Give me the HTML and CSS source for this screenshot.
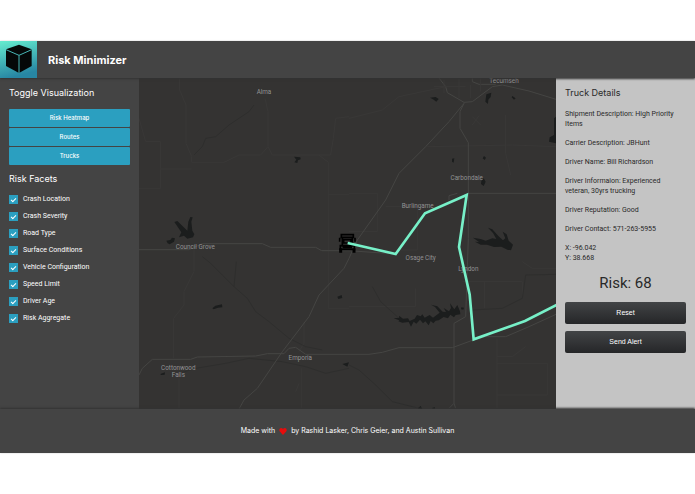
FILE: index.html
```html
<!DOCTYPE html>
<html lang="en">
<head>
<meta charset="utf-8">
<title>Risk Minimizer</title>
<link rel="stylesheet" href="styles.css">
</head>
<body>
<div class="app">
  <header class="header">
    <svg class="logo" viewBox="0 0 111 111" aria-hidden="true">
      <defs>
        <linearGradient id="logo-fill" x1="0" y1="0" x2="0.25" y2="1">
          <stop offset="0" stop-color="#66edcf"/>
          <stop offset="1" stop-color="#2786a3"/>
        </linearGradient>
      </defs>
      <rect width="111" height="111" fill="url(#logo-fill)"/>
      <path d="M57 11 95 25 95 75 57 96 18 75 18 25Z" fill="#050808"/>
      <path d="M18 26 57 43 95 26M57 43V96" fill="none" stroke="#46b5b5" stroke-width="3"/>
    </svg>
    <h1 class="title">Risk Minimizer</h1>
  </header>

  <main class="main">
    <aside class="sidebar">
      <h2 class="heading">Toggle Visualization</h2>
      <div class="toggles">
        <button class="toggle" type="button">Risk Heatmap</button>
        <button class="toggle" type="button">Routes</button>
        <button class="toggle" type="button">Trucks</button>
      </div>
      <h2 class="heading">Risk Facets</h2>
      <div class="facets">
        <label class="facet"><input type="checkbox" checked>Crash Location</label>
        <label class="facet"><input type="checkbox" checked>Crash Severity</label>
        <label class="facet"><input type="checkbox" checked>Road Type</label>
        <label class="facet"><input type="checkbox" checked>Surface Conditions</label>
        <label class="facet"><input type="checkbox" checked>Vehicle Configuration</label>
        <label class="facet"><input type="checkbox" checked>Speed Limit</label>
        <label class="facet"><input type="checkbox" checked>Driver Age</label>
        <label class="facet"><input type="checkbox" checked>Risk Aggregate</label>
      </div>
    </aside>

    <section class="map" aria-label="Map">
      <svg class="map-canvas" viewBox="0 9 1251 993" preserveAspectRatio="xMidYMid slice">
        <!-- minor roads and county lines -->
        <g class="road faint">
          <path d="M122 9V45L141 90V205L158 245V262H255L300 240H365L387 215V110L378 70M387 215 400 240H575L583 190 590 130 630 125M0 130 20 200H65V340H0M65 282H158M540 240 568 262V700H630M568 358H630M165 520V590L135 650V690L104 730V850M120 910V1000M495 740V805L480 830M487 880V1000M470 950 480 925"/>
          <path d="M630 130 730 105 780 65 850 50 920 35M630 355H715V470H630M740 395H835V525M865 215 1120 210 1251 215M1100 120V235L1115 300M835 525H770M630 695H830V640M1037 620V700M970 620H1150V670M1074 790V1000M1074 845H1120L1160 815M1074 865H1225V960H1074M1150 560 1180 580H1251"/>
        </g>
        <!-- rivers -->
        <g class="river">
          <path d="M345 90 330 110 270 150 230 185 200 190 190 215 165 240"/>
          <path d="M190 545 215 565 250 600 285 635 325 670 350 710 390 740 420 765 450 790 500 815 550 825M285 635 292 560M120 895 170 880 260 865 330 850 430 860 500 875 560 895 630 880"/>
          <path d="M700 635 725 680 775 725M1000 705 1090 700 1150 670 1160 600 1251 598M630 870 660 885 710 930 760 980 840 1000"/>
        </g>
        <!-- highways -->
        <g class="road">
          <path d="M0 524H150L190 506H370L395 517H530L548 527H630L770 537"/>
          <path d="M0 900 10 880 40 853H155L175 846 350 843 385 836H435L450 820 470 817 500 838H690L730 832 780 818H940L1000 796 1040 785H1100L1170 755 1251 718"/>
          <path d="M630 550 615 580 540 660 510 725 430 830 355 940 315 975 300 1002M630 550 655 495 740 375 780 295 860 215 930 140 975 85M975 85 963 110V160L988 203V490L980 725 945 745V985L930 1000M945 985 950 1000"/>
          <path d="M900 9 920 35 925 53 975 82 1000 80 1060 35 1090 30 1170 48 1251 73M985 355H1251M930 375V362L955 355M1000 9V20L1020 28H1070"/>
        </g>
        <g class="road faint"><path d="M885 35H980M915 15V55M960 12V70M995 30V70M1025 9V50M1000 125 1025 150M1020 122 1000 150"/></g>
        <!-- lakes -->
        <g class="lake">
          <path d="M106 441 115 438 145 467 148 440 154 426 161 427 157 440 160 467 166 478 162 487 145 491 135 482 120 487 127 472ZM82 497 94 495 99 488 108 490 105 500 92 508 86 505Z"/>
          <path d="M465 245 484 247 485 253 477 256 475 264 466 262 472 254ZM220 700 229 692 249 688 250 697 237 698 224 703ZM595 665 608 660 610 669 598 672ZM64 897 78 892 77 899 66 900Z"/>
          <path d="M873 68 890 66 899 72 892 80 882 73ZM1042 58 1057 53 1055 66 1048 74 1047 87 1039 80ZM1120 63 1130 70 1125 74 1118 67ZM1245 130 1251 125V205L1230 200 1232 187 1245 180ZM939 251 946 250 944 263 939 260ZM1035 243 1041 248 1037 255 1031 250ZM1027 318 1034 310 1040 320 1034 333 1026 327Z"/>
          <path d="M1002 488 1025 492 1040 497 1060 490 1072 492 1062 474 1047 458 1060 463 1078 483 1092 496 1099 490 1091 470 1103 478 1109 497 1122 509 1116 526 1105 524 1087 515 1065 516 1044 509 1025 509 1008 500 1020 501Z"/>
          <path d="M764 730 781 728 780 722 792 731 807 730 812 738 827 731 834 720 845 724 850 718 857 728 872 720 882 728 902 713 888 696 876 689 895 694 911 710 921 711 914 699 930 709 936 699 933 685 946 703 955 690 963 709 964 718 950 720 945 727 934 719 927 730 914 726 899 736 890 737 883 745 875 738 869 751 859 739 852 745 843 734 832 746 824 740 816 755 809 741 790 743 778 739 781 736ZM967 697 975 698 973 704 966 703ZM838 998 845 993 850 1002H838ZM880 998 888 996V1002H880ZM610 867 630 862 625 875Z"/>
        </g>
        <g class="place">
          <text x="375" y="57">Alma</text>
          <text x="1095" y="24">Tecumseh</text>
          <text x="983" y="316">Carbondale</text>
          <text x="836" y="400">Burlingame</text>
          <text x="169" y="522">Council Grove</text>
          <text x="845" y="556">Osage City</text>
          <text x="988" y="587">Lyndon</text>
          <text x="484" y="854">Emporia</text>
          <text x="118" y="884">Cottonwood</text>
          <text x="118" y="906">Falls</text>
        </g>
        <!-- truck -->
        <g fill="none" stroke="#000" stroke-width="5">
          <path d="M607 479H643V487H607ZM610 487V515M640 487V515M614 494H636V504H614ZM602 488V500M648 488V500M604 512H646V523H604ZM611 517H639"/>
          <path d="M605 520V533M645 520V533" stroke-width="9"/>
        </g>
        <path class="route" d="M626 504 770 537 858 415 983 360 960 516 992 658 1004 793 1158 738 1260 686"/>
      </svg>
    </section>

    <aside class="details">
      <h2 class="heading">Truck Details</h2>
      <div class="facts">
        <p>Shipment Description: High Priority Items</p>
        <p>Carrier Description: JBHunt</p>
        <p>Driver Name: Bill Richardson</p>
        <p>Driver Informaion: Experienced veteran, 30yrs trucking</p>
        <p>Driver Reputation: Good</p>
        <p>Driver Contact: 571-263-5955</p>
        <p>X: -96.042<br>Y: 38.668</p>
      </div>
      <div class="risk">Risk: 68</div>
      <div class="actions">
        <button class="action" type="button">Reset</button>
        <button class="action" type="button">Send Alert</button>
      </div>
    </aside>
  </main>

  <footer class="footer">
    <span>Made with</span>
    <svg class="heart" viewBox="0 0 24 22" role="img" aria-label="love"><path d="M12 22 2 11C-2 5 2 0 6 0S12 3 12 4C12 3 14 0 18 0S26 5 22 11Z" fill="#e60c0c"/></svg>
    <span>by Rashid Lasker, Chris Geier, and Austin Sullivan</span>
  </footer>
</div>
</body>
</html>
```

FILE: styles.css
```css
* {
  box-sizing: border-box;
}

body {
  margin: 0;
  padding: 41px 0;
  background: #fff;
  color: #fff;
  font-family: Inter, "Liberation Sans", sans-serif;
  font-size: 6px;
  line-height: 10px;
}

h1, h2, p {
  margin: 0;
}

button {
  font: inherit;
  color: inherit;
  border: 0;
  padding: 0;
}

.app {
  background: #444;
}

.header {
  position: relative;
  display: flex;
  align-items: center;
  gap: 11px;
  box-shadow: 0 1px 2px #333;
}

.logo {
  width: 37px;
  height: 37px;
}

.title {
  font-size: 11px;
  line-height: 16px;
  font-weight: 700;
}

.main {
  display: grid;
  grid-template-columns: 1fr 3fr 1fr;
}

.sidebar,
.details {
  padding: 9px;
}

.heading {
  font-size: 9px;
  line-height: 12px;
  font-weight: 400;
}

.toggles {
  display: grid;
  gap: 1px;
  margin: 10px 0 8px;
}

.toggle {
  height: 18px;
  border-radius: 1px;
  background: #2b9fc0;
  font-weight: 500;
}

.facets {
  display: grid;
  gap: 7px;
  margin-top: 9px;
}

.facet {
  display: flex;
  align-items: center;
  gap: 5px;
  font-family: Roboto, sans-serif;
  font-size: 7px;
}

.facet input {
  appearance: none;
  width: 9px;
  height: 9px;
  margin: 0;
  background: #2b9fc0;
  display: grid;
  place-items: center;
}

.facet input:checked::before {
  content: "";
  width: 4px;
  height: 2px;
  border: solid #fff;
  border-width: 0 0 1px 1px;
  transform: rotate(-45deg);
}

.map {
  background: #343332;
}

.map-canvas {
  display: block;
  width: 100%;
  height: 100%;
}

.road {
  fill: none;
  stroke: #454543;
  stroke-width: 3;
}

.faint {
  stroke: #393837;
}

.river {
  fill: none;
  stroke: #2e2e2d;
  stroke-width: 3;
}

.lake {
  fill: #1b1d1d;
}

.place {
  fill: #929292;
  font-family: Roboto, sans-serif;
  font-size: 19px;
  text-anchor: middle;
}

.route {
  fill: none;
  stroke: #77f0c8;
  stroke-width: 8;
}

.details {
  background: #c4c4c4;
  color: #292929;
}

.facts {
  display: grid;
  gap: 9px;
  margin-top: 10px;
  font-family: Roboto, sans-serif;
  font-size: 7px;
}

.risk {
  margin: 12px 0 11px;
  font-family: Roboto, sans-serif;
  font-size: 15px;
  line-height: 16px;
  text-align: center;
}

.actions {
  display: grid;
  gap: 7px;
}

.action {
  height: 22px;
  border-radius: 2px;
  background: linear-gradient(#424446, #252628);
  color: #fff;
  font-family: "Liberation Sans", sans-serif;
  font-size: 7px;
}

.footer {
  position: relative;
  display: flex;
  align-items: center;
  justify-content: center;
  gap: 4px;
  padding: 17px 9px;
  font-size: 7px;
  box-shadow: 0 -1px 2px #333;
}

.heart {
  width: 8px;
  height: 7px;
}
```
